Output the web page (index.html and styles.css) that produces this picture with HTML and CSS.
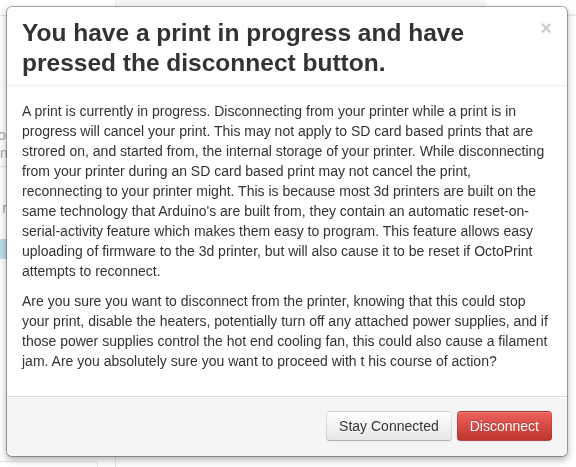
FILE: index.html
```html
<!DOCTYPE html>
<html>
<head>
<meta charset="utf-8">
<link rel="stylesheet" href="styles.css">
</head>
<body>
<div class="page">
  <div class="topbar">
    <div class="tab tab-left"></div>
    <div class="tab tab-mid"></div>
    <div class="tab tab-right">s</div>
  </div>
  <div class="sidebar">
    <div class="side-text">o,</div>
    <div class="side-text">n</div>
    <div class="side-rule"></div>
    <div class="side-text">r</div>
    <div class="side-blue"></div>
  </div>
  <div class="bottom-row">
    <div class="bottom-box"></div>
    <div class="bottom-line"></div>
  </div>
</div>

<div class="modal">
  <div class="modal-header">
    <button class="close" type="button">&times;</button>
    <h3>You have a print in progress and have pressed the disconnect button.</h3>
  </div>
  <div class="modal-body">
    <p>A print is currently in progress. Disconnecting from your printer while a print is in progress will cancel your print. This may not apply to SD card based prints that are strored on, and started from, the internal storage of your printer. While disconnecting from your printer during an SD card based print may not cancel the print, reconnecting to your printer might. This is because most 3d printers are built on the same technology that Arduino's are built from, they contain an automatic reset-on-serial-activity feature which makes them easy to program. This feature allows easy uploading of firmware to the 3d printer, but will also cause it to be reset if OctoPrint attempts to reconnect.</p>
    <p>Are you sure you want to disconnect from the printer, knowing that this could stop your print, disable the heaters, potentially turn off any attached power supplies, and if those power supplies control the hot end cooling fan, this could also cause a filament jam. Are you absolutely sure you want to proceed with t his course of action?</p>
  </div>
  <div class="modal-footer">
    <button class="btn" type="button">Stay Connected</button>
    <button class="btn btn-danger" type="button">Disconnect</button>
  </div>
</div>
</body>
</html>
```

FILE: styles.css
```css
html, body {
  margin: 0;
  padding: 0;
}
body {
  font-family: "Liberation Sans", Arial, Helvetica, sans-serif;
  font-size: 14px;
  line-height: 20px;
  color: #333;
  background: #fff;
  width: 576px;
  height: 467px;
  overflow: hidden;
}

/* background page (mostly hidden behind the dialog) */
.page {
  height: 467px;
  display: flex;
  flex-direction: column;
}
.topbar {
  height: 15px;
  display: flex;
  border-bottom: 1px solid #e8e8e8;
}
.tab {
  height: 15px;
  overflow: hidden;
}
.tab-left {
  width: 115px;
  border-right: 1px solid #eee;
}
.tab-mid {
  width: 370px;
  background: #f6f6f6;
}
.tab-right {
  flex: 1;
  padding-left: 84px;
  font-size: 13px;
  line-height: 34px;
  color: #ddd;
}
.sidebar {
  margin-top: 110px;
  width: 7px;
  color: #aaa;
  display: flex;
  flex-direction: column;
  white-space: nowrap;
}
.side-text {
  height: 18px;
  line-height: 18px;
  font-size: 14px;
  text-align: right;
  overflow: hidden;
}
.side-text:first-child {
  text-align: left;
  margin-left: -2px;
}
.side-rule {
  height: 1px;
  background: #e6e6e6;
  margin: 4px 0 32px;
}
.side-blue {
  margin-top: 22px;
  height: 20px;
  background: #bfdcee;
}
.bottom-row {
  margin-top: auto;
  height: 10px;
  display: flex;
  align-items: flex-end;
}
.bottom-box {
  width: 97px;
  height: 5px;
  border: 1px solid #e6e6e6;
  border-bottom: none;
  border-left: none;
  border-radius: 0 4px 0 0;
}
.bottom-line {
  margin-left: 17px;
  width: 1px;
  height: 10px;
  background: #e6e6e6;
}

/* modal */
.modal {
  position: fixed;
  top: 6px;
  left: 6px;
  width: 560px;
  background: #fff;
  border: 1px solid rgba(0, 0, 0, 0.3);
  border-radius: 6px;
  box-shadow: 0 3px 7px rgba(0, 0, 0, 0.3);
  background-clip: padding-box;
}
.modal-header {
  padding: 11px 15px 7px;
  border-bottom: 1px solid #eee;
}
.modal-header h3 {
  margin: 0;
  font-size: 24.5px;
  line-height: 30px;
  font-weight: bold;
  color: #333;
}
.close {
  float: right;
  margin-top: 0;
  padding: 0;
  border: 0;
  background: transparent;
  font-family: "Liberation Sans", Arial, sans-serif;
  font-size: 20px;
  font-weight: bold;
  line-height: 20px;
  color: #000;
  text-shadow: 0 1px 0 #fff;
  opacity: 0.2;
  cursor: pointer;
}
.modal-body {
  padding: 15px;
}
.modal-body p {
  margin: 0 0 10px;
}
.modal-footer {
  padding: 14px 15px 15px;
  text-align: right;
  background: #f5f5f5;
  border-top: 1px solid #ddd;
  border-radius: 0 0 6px 6px;
  box-shadow: inset 0 1px 0 #fff;
  font-size: 0;
}
.btn {
  display: inline-block;
  padding: 4px 12px;
  margin: 0;
  font-family: "Liberation Sans", Arial, sans-serif;
  font-size: 14px;
  line-height: 20px;
  color: #333;
  text-align: center;
  text-shadow: 0 1px 1px rgba(255, 255, 255, 0.75);
  vertical-align: middle;
  background-color: #f5f5f5;
  background-image: linear-gradient(to bottom, #ffffff, #e6e6e6);
  border: 1px solid #cccccc;
  border-color: rgba(0, 0, 0, 0.1) rgba(0, 0, 0, 0.1) rgba(0, 0, 0, 0.25);
  border-bottom-color: #b3b3b3;
  border-radius: 4px;
  box-shadow: inset 0 1px 0 rgba(255, 255, 255, 0.2), 0 1px 2px rgba(0, 0, 0, 0.05);
  cursor: pointer;
}
.btn + .btn {
  margin-left: 5px;
}
.btn-danger {
  color: #fff;
  text-shadow: 0 -1px 0 rgba(0, 0, 0, 0.25);
  background-color: #da4f49;
  background-image: linear-gradient(to bottom, #ee5f5b, #bd362f);
  border-color: rgba(0, 0, 0, 0.1) rgba(0, 0, 0, 0.1) rgba(0, 0, 0, 0.25);
}
```
